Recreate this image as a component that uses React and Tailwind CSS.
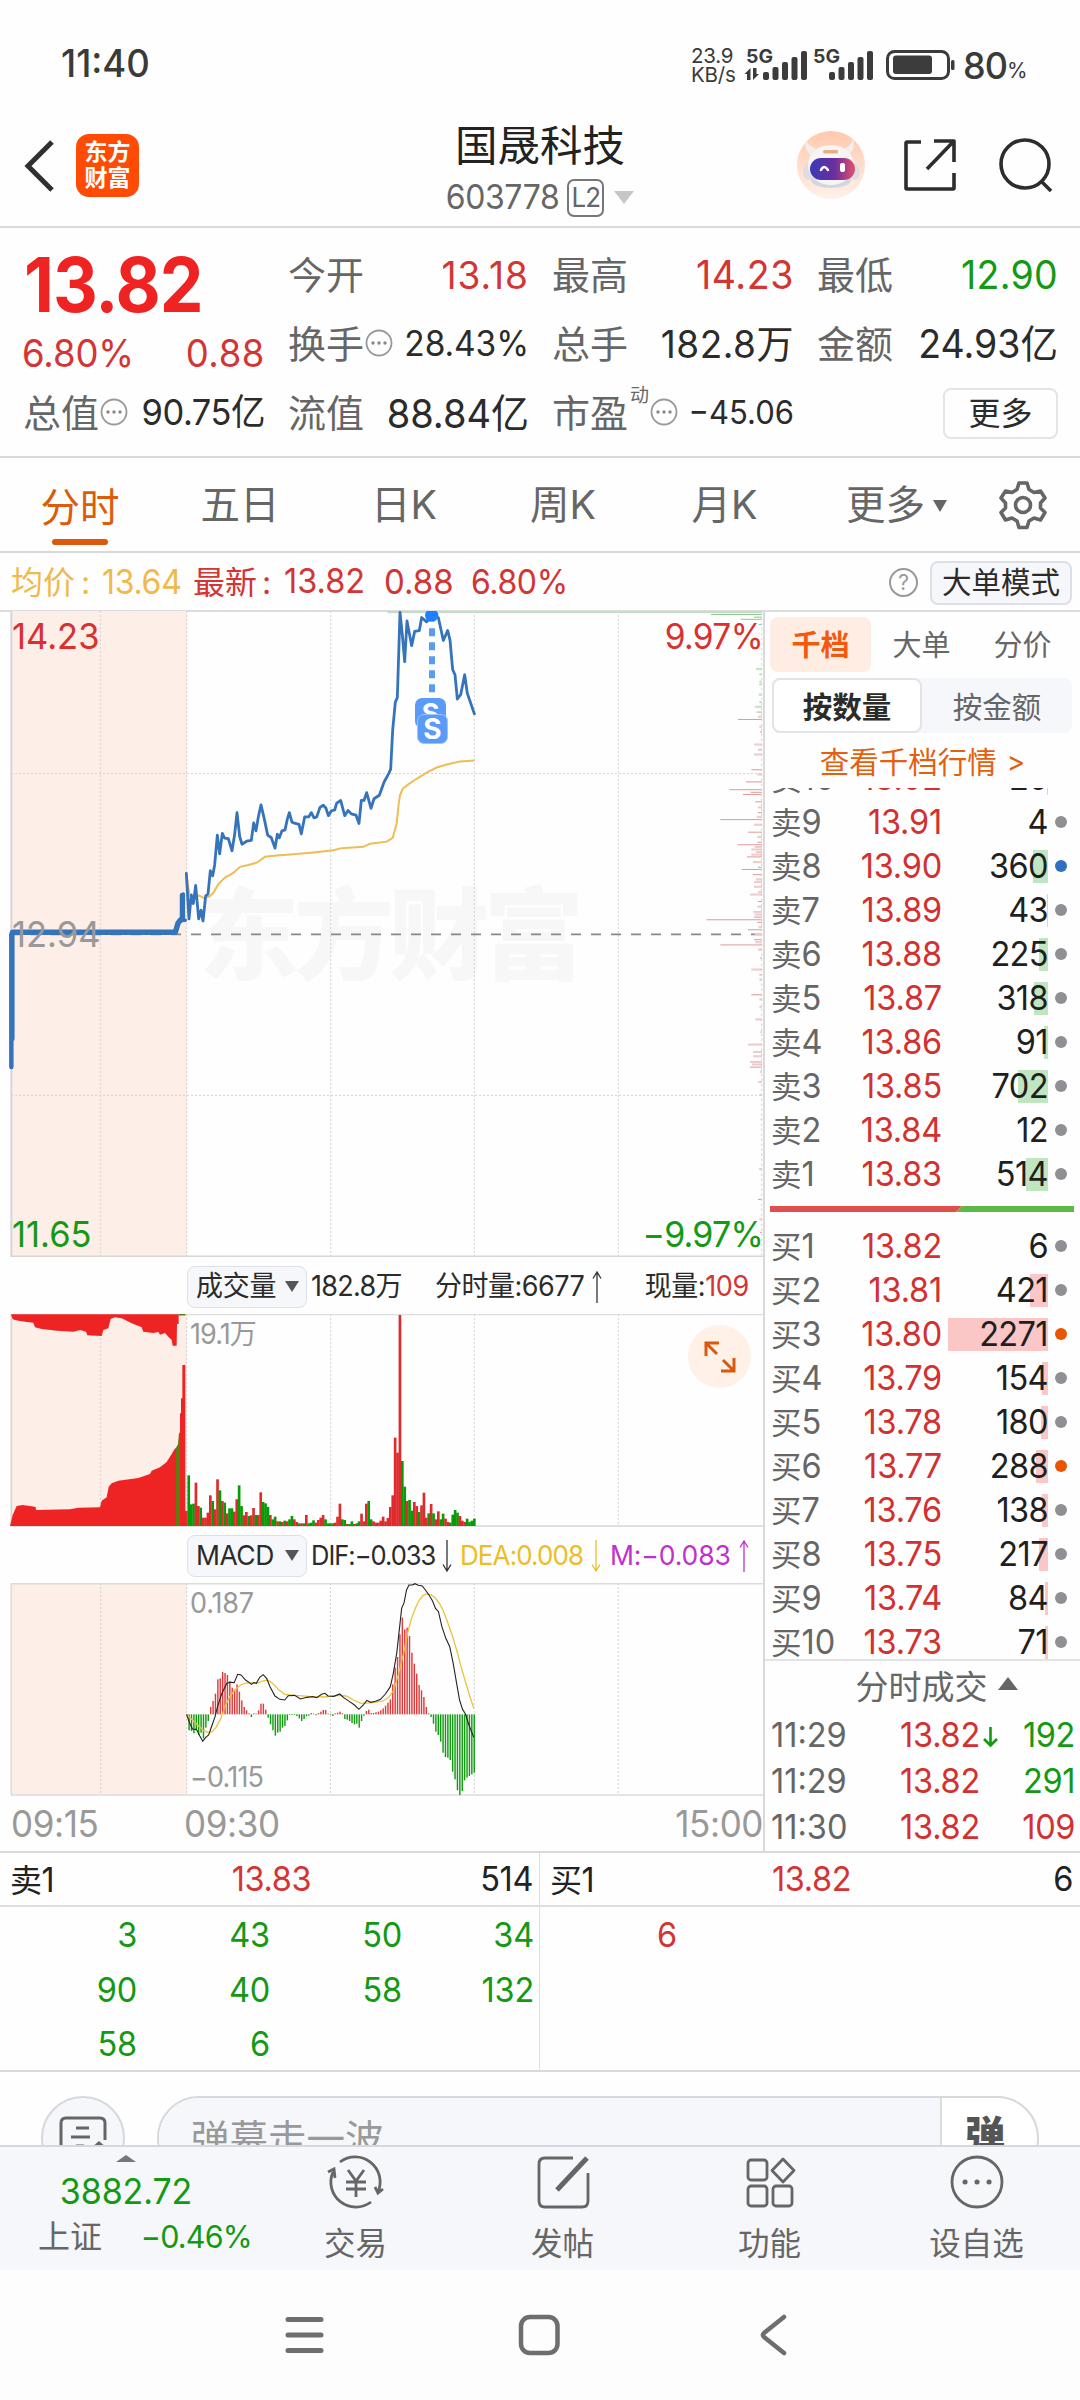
import clsx from "clsx";

// Minute bars: [height, isUp]
const VOLUME = [
  [45, 1], [152, 0], [65, 0], [67, 0], [130, 1], [60, 1], [55, 0], [25, 1], [25, 1], [40, 1],
  [92, 1], [75, 0], [50, 1], [140, 1], [107, 0], [75, 1], [70, 0], [38, 1], [53, 0], [53, 0],
  [43, 1], [80, 1], [122, 0], [60, 0], [32, 1], [42, 1], [30, 0], [32, 1], [54, 1], [33, 0],
  [33, 1], [101, 1], [72, 0], [68, 0], [57, 0], [33, 1], [20, 0], [28, 0], [14, 1], [14, 0],
  [12, 1], [16, 0], [14, 1], [20, 0], [30, 0], [20, 1], [12, 1], [8, 0], [8, 1], [8, 0],
  [33, 1], [8, 0], [10, 0], [17, 0], [10, 1], [18, 1], [25, 1], [33, 1], [20, 0], [8, 0],
  [8, 0], [8, 0], [10, 1], [28, 1], [67, 1], [20, 0], [18, 0], [6, 1], [6, 0], [14, 0],
  [6, 1], [8, 0], [14, 0], [37, 1], [14, 1], [67, 1], [75, 0], [20, 0], [14, 1], [10, 1],
  [10, 1], [16, 1], [28, 1], [14, 1], [24, 1], [57, 1], [92, 1], [265, 1], [220, 1], [633, 1],
  [195, 0], [118, 0], [75, 1], [78, 0], [46, 0], [72, 1], [60, 1], [42, 0], [62, 1], [100, 1],
  [25, 1], [38, 0], [66, 1], [38, 0], [20, 1], [44, 1], [20, 0], [37, 0], [22, 1], [12, 1],
  [10, 0], [34, 0], [48, 0], [40, 0], [30, 1], [16, 1], [12, 1], [22, 0], [12, 0], [16, 0], [22, 0],
];

const MACD = [
  0, -48, -50, -57, -48, -62, -55, -72, -40, -20, 22, 40, 62, 105, 108, 127, 124, 118, 100, 80,
  73, 90, 68, 42, 22, 12, 3, -8, 3, 2, 12, 32, 32, 14, -10, -30, -48, -64, -55, -52,
  -40, -35, -18, -2, -2, -2, -5, -12, -20, -14, -6, -4, 4, 2, -3, 4, 8, 13, 13, 2,
  -2, -5, 3, 5, 8, 3, -14, -16, -20, -26, -30, -28, -40, -20, -4, 10, 14, 4, 4, 6,
  8, 12, 18, 26, 35, 45, 90, 140, 172, 240, 290, 255, 260, 235, 185, 152, 122, 88, 72, 52,
  22, 3, -8, -28, -52, -62, -82, -115, -128, -130, -137, -172, -195, -228, -242, -230, -198, -190, -185, -180, -175,
];

// Price distribution on the right edge: [y, width]
const SPREAD = [
  [33, 153], [39, 24], [44, 64], [56, 10], [159, 18], [171, 8], [188, 8], [194, 8], [218, 10], [235, 8], [246, 22], [258, 16],
  [269, 12], [275, 72], [292, 8], [304, 6], [333, 24], [345, 12], [356, 24], [391, 32], [402, 14], [419, 48], [437, 98], [443, 34],
  [448, 57], [465, 20], [478, 12], [490, 12], [500, 16], [506, 125], [518, 24], [535, 42], [546, 14], [558, 14], [564, 74], [569, 22],
  [575, 32], [581, 18], [587, 32], [592, 45], [604, 27], [616, 12], [621, 61], [633, 27], [644, 18], [650, 24], [661, 24], [673, 12],
  [679, 36], [695, 12], [707, 14], [719, 26], [725, 22], [731, 24], [737, 167], [743, 14], [754, 10], [760, 42], [771, 22], [783, 24],
  [789, 20], [795, 125], [806, 12], [825, 6], [852, 32], [864, 8], [875, 8], [910, 32], [921, 8], [938, 8], [967, 20], [996, 5],
  [1025, 42], [1042, 27], [1052, 27], [1065, 36], [1071, 30], [1077, 36], [1088, 6], [1111, 12], [1141, 8], [1197, 4], [1312, 9], [1382, 12],
  [1428, 8], [1458, 6],
];

const SELLS = [
  ["卖10", "13.92", 20, 1],
  ["卖9", "13.91", 4, 0],
  ["卖8", "13.90", 360, 15, "bg-[#2f6fc1]"],
  ["卖7", "13.89", 43, 1],
  ["卖6", "13.88", 225, 9],
  ["卖5", "13.87", 318, 14],
  ["卖4", "13.86", 91, 4],
  ["卖3", "13.85", 702, 30],
  ["卖2", "13.84", 12, 0],
  ["卖1", "13.83", 514, 22],
];

const BUYS = [
  ["买1", "13.82", 6, 0],
  ["买2", "13.81", 421, 18],
  ["买3", "13.80", 2271, 100, "bg-[#e85503]"],
  ["买4", "13.79", 154, 6],
  ["买5", "13.78", 180, 7],
  ["买6", "13.77", 288, 12, "bg-[#e85503]"],
  ["买7", "13.76", 138, 6],
  ["买8", "13.75", 217, 9],
  ["买9", "13.74", 84, 3],
  ["买10", "13.73", 71, 3],
];

const PRICE_LINE =
  "559,630 567,735 574,680 580,700 587,658 596,735 603,715 609,740 617,682 624,678 631,624 638,636 644,610 652,542 659,585 667,538 674,549 685,550 696,578 704,540 711,490 719,545 726,563 740,556 754,554 761,514 768,532 775,500 783,472 793,505 803,542 814,548 825,572 832,540 838,548 846,532 855,530 862,505 868,490 876,512 886,515 897,517 904,539 914,500 926,500 934,490 942,502 950,500 960,478 970,473 978,480 985,497 994,486 1004,484 1010,468 1022,462 1034,497 1044,485 1054,493 1068,496 1077,515 1084,462 1092,462 1100,444 1113,480 1122,458 1138,450 1152,420 1166,400 1172,390 1178,300 1186,235 1192,225 1200,28 1207,80 1214,142 1221,48 1235,105 1244,72 1258,70 1265,40 1280,50 1294,35 1315,40 1330,93 1343,70 1350,92 1358,160 1365,172 1372,228 1382,218 1394,172 1402,215 1423,262";

const AVG_LINE =
  "559,630 568,678 580,690 597,681 612,687 628,684 640,675 655,655 675,640 700,629 720,615 745,611 772,605 795,592 830,589 880,586 940,582 1000,577 1025,572 1090,569 1110,562 1160,557 1178,548 1190,515 1196,470 1200,450 1208,435 1225,425 1250,412 1280,398 1310,386 1340,379 1380,372 1423,370";

const DIF_LINE =
  "380,553 385,575 392,597 400,598 407,618 413,634 419,622 425,615 432,585 438,560 443,530 452,490 462,460 470,457 477,458 484,433 491,435 500,450 508,458 512,463 517,458 522,460 529,442 536,434 543,445 550,470 560,498 570,508 580,510 587,497 600,496 612,507 625,502 637,500 645,503 655,493 662,490 668,498 680,499 692,492 700,503 712,515 722,525 731,538 740,525 747,511 755,517 765,514 775,508 785,492 795,470 801,430 808,370 814,290 818,235 823,218 828,180 833,165 840,165 845,161 852,166 860,168 868,183 875,198 881,213 887,235 893,245 900,290 908,325 916,350 923,400 930,460 936,510 942,538 948,552 955,585 965,622";

const DEA_LINE =
  "380,553 392,570 405,588 415,602 425,608 432,605 440,592 450,565 458,530 468,500 478,480 490,465 502,459 525,459 535,453 545,450 555,460 568,480 580,493 600,496 630,499 660,501 690,496 705,498 720,510 735,520 760,518 780,513 792,502 802,480 812,430 822,370 830,310 838,265 846,235 854,210 862,196 870,192 878,194 886,203 895,220 903,243 912,278 922,320 932,370 940,415 948,455 956,495 965,535";

const RED = "#ee2424";
const GREEN = "#069c06";

// Numbers are drawn slightly taller than the hanzi next to them
function Num({ className, children }) {
  return <span className={clsx("inline-block scale-y-[1.04] whitespace-nowrap", className)}>{children}</span>;
}

function StatusBar() {
  return (
    <div className="flex h-[128px] items-center pt-[2px] text-[#3a3a3a]">
      <Num className="ml-[61px] w-[630px] text-[36.500px] font-medium">11:40</Num>
      <div className="w-[51px] text-[20.500px] leading-[19px] tracking-[-0.2px]">
        <div>23.9</div>
        <div>KB/s</div>
      </div>
      <svg width="216" height="40" viewBox="744 44 216 40" className="shrink-0" fill="#3c3c3c">
        <text x="748" y="61.500" fontSize="19" fontWeight="700" textLength="27" lengthAdjust="spacingAndGlyphs">5G</text>
        <text x="815" y="61.500" fontSize="19" fontWeight="700" textLength="27" lengthAdjust="spacingAndGlyphs">5G</text>
        <path d="M749 79h3.500V67l-6 6h2.500zM755 67h3.500v6h2.500l-6 6z" />
        {[765, 831].map((x) => (
          <g key={x}>
            <rect x={x} y="71" width="6" height="8" rx="2" />
            <rect x={x + 9.5} y="66" width="6" height="13" rx="2" />
            <rect x={x + 19} y="61" width="6" height="18" rx="2" />
            <rect x={x + 28.500} y="56" width="6" height="23" rx="2" />
            <rect x={x + 38} y="50" width="6" height="29" rx="2" />
          </g>
        ))}
        <rect x="889.500" y="50.500" width="61" height="27" rx="7" fill="none" stroke="#3c3c3c" strokeWidth="3" />
        <rect x="895" y="54.500" width="39" height="18.500" rx="3" />
        <rect x="953" y="59" width="3.500" height="10" rx="1.500" />
      </svg>
      <div className="ml-[5px] flex items-baseline">
        <Num className="text-[36px] font-medium tracking-[-1px]">80</Num>
        <span className="text-[21px]">%</span>
      </div>
    </div>
  );
}

function Robot() {
  return (
    <svg width="68" height="70" viewBox="0 0 68 70">
      <defs>
        <linearGradient id="halo" x1="0" y1="0" x2="0" y2="1">
          <stop offset="0" stopColor="#ffc9ad" />
          <stop offset="1" stopColor="#fff1ea" />
        </linearGradient>
        <linearGradient id="visor" x1="0" y1="0" x2="1" y2="0">
          <stop offset="0" stopColor="#3b39b5" />
          <stop offset="0.55" stopColor="#6b2f9c" />
          <stop offset="1" stopColor="#e5506a" />
        </linearGradient>
      </defs>
      <circle cx="34" cy="35" r="34" fill="url(#halo)" />
      <path d="M9 10q-3 9 5 15l5-6q-8-3-10-9zM56 9q3 9-4 16l-5-6q7-3 9-10z" fill="#f3eeee" />
      <ellipse cx="34" cy="50" rx="20" ry="8" fill="#d5d5df" />
      <ellipse cx="11" cy="42" rx="5" ry="8" fill="#dfdde4" />
      <ellipse cx="58" cy="42" rx="5" ry="8" fill="#dfdde4" />
      <ellipse cx="34" cy="35" rx="23" ry="20" fill="#f7f4f5" />
      <rect x="13" y="28" width="45" height="22" rx="11" fill="url(#visor)" />
      <path d="M24 40q3-6 7 0" fill="none" stroke="#fff" strokeWidth="2.500" strokeLinecap="round" />
      <rect x="43" y="33" width="5" height="9" rx="2" fill="#fff" />
      <rect x="26" y="20" width="15" height="3.500" rx="1.500" fill="#e3b184" />
    </svg>
  );
}

function Header() {
  return (
    <header className="flex h-[100px] items-center border-b-2 border-[#d9d9d9]">
      <svg width="32" height="56" viewBox="0 0 32 56" className="mt-[-24px] ml-[23px]" fill="none" stroke="#303030" strokeWidth="5">
        <path d="M29 5 5 29 29 53" />
      </svg>
      <div className="mt-[-24px] ml-[21px] flex size-[63px] flex-col items-center justify-center rounded-[13px] bg-[#ff4b04] text-[23px] leading-[26px] font-bold text-white">
        <span>东方</span>
        <span>财富</span>
      </div>
      <div className="mt-[-18px] ml-[256px] flex w-[290px] flex-col items-center">
        <div className="text-[42.500px] leading-[54px] text-[#222]">国晟科技</div>
        <div className="flex h-[44px] items-center pt-[5px] text-[#666]">
          <Num className="text-[32px] tracking-[-0.4px]">603778</Num>
          <span className="ml-2 flex h-[38px] w-[37px] items-center justify-center rounded-[7px] border-2 border-[#777]">
            <Num className="text-[26px] tracking-[-1px]">L2</Num>
          </span>
          <svg width="20" height="13" viewBox="0 0 20 13" className="ml-[10px]"><path d="M0 0h20L10 13z" fill="#c6c6c6" /></svg>
        </div>
      </div>
      <div className="mt-[-24px] ml-[112px]"><Robot /></div>
      <svg width="60" height="60" viewBox="0 0 60 60" className="mt-[-22px] ml-[36px]" fill="none" stroke="#2d2d2d" strokeWidth="3.600">
        <path d="M20 6H6q-1 0-1 1v45q0 1 1 1h46q1 0 1-1V37M33 5h20v21M52 6 26 33" strokeLinejoin="round" />
      </svg>
      <svg width="60" height="60" viewBox="0 0 60 60" className="mt-[-22px] ml-[36px]" fill="none" stroke="#2d2d2d" strokeWidth="3.600">
        <circle cx="28" cy="28" r="24" />
        <path d="m44 45 10 10" />
      </svg>
    </header>
  );
}

function MoreDots() {
  return (
    <svg width="28" height="28" viewBox="0 0 28 28" className="mb-1 ml-px shrink-0">
      <circle cx="14" cy="14" r="12.500" fill="none" stroke="#999" strokeWidth="1.800" />
      <circle cx="8" cy="14" r="1.700" fill="#888" />
      <circle cx="14" cy="14" r="1.700" fill="#888" />
      <circle cx="20" cy="14" r="1.700" fill="#888" />
    </svg>
  );
}

function Stat({ label, dots, note, value, tone = "text-[#2b2b2b]", size = "text-[34px]" }) {
  return (
    <div className="flex h-[69px] items-center">
      <span className="ml-[-1px] text-[38px] whitespace-nowrap text-[#666]">{label}</span>
      {note && <span className="mb-[34px] ml-[2px] text-[19px] text-[#666]">{note}</span>}
      {dots && <MoreDots />}
      <Num className={clsx("mr-[-2px] ml-auto", size, tone)}>{value}</Num>
    </div>
  );
}

function Quote() {
  return (
    <section className="flex h-[230px] gap-[26px] border-b-2 border-[#d9d9d9] pt-[13px] pr-[23px] pl-[24px]">
      <div className="w-[239px]">
        <Num className="h-[86px] origin-center scale-y-[1.08] text-[69.500px] leading-[88px] font-bold tracking-[-1px] text-[#f02323]">13.82</Num>
        <div className="flex h-[52px] items-center justify-between pt-[4px] text-[36.500px] text-[#d33434]">
          <Num className="ml-[-2px] tracking-[-0.1px]">6.80%</Num>
          <Num className="mr-[-2px] tracking-[0.6px]">0.88</Num>
        </div>
        <Stat label="总值" dots value="90.75亿" size="text-[34.500px] tracking-[-0.5px]" />
      </div>
      <div className="w-[238px]">
        <Stat label="今开" value="13.18" tone="text-[#d33434]" size="text-[37px] tracking-[1px]" />
        <Stat label="换手" dots value="28.43%" size="text-[33.500px] tracking-[-0.1px]" />
        <Stat label="流值" value="88.84亿" size="text-[38px]" />
      </div>
      <div className="w-[239px]">
        <Stat label="最高" value="14.23" tone="text-[#d33434]" size="text-[37.500px] tracking-[0.6px]" />
        <Stat label="总手" value="182.8万" size="text-[37px] tracking-[0.5px]" />
        <Stat label="市盈" note="动" dots value="−45.06" size="text-[31px]" />
      </div>
      <div className="w-[238px]">
        <Stat label="最低" value="12.90" tone="text-[#149914]" size="text-[37.500px] tracking-[0.3px]" />
        <Stat label="金额" value="24.93亿" size="text-[37.500px]" />
        <div className="flex h-[69px] items-center justify-end">
          <div className="mr-[-2px] flex h-[51px] w-[115px] items-center justify-center rounded-lg border-2 border-[#e4e4e6] text-[32px] text-[#2b2b2b]">更多</div>
        </div>
      </div>
    </section>
  );
}

function Gear() {
  return (
    <svg width="50" height="50" viewBox="0 0 50 50" fill="none" stroke="#666" strokeWidth="3.600" strokeLinejoin="round">
      <path d="M21 3h8l2 6.500 5 3 6.500-1.500 4.500 7-4.500 5v5l4.500 4.500-4.500 7.500-6.500-2-5 3-2 6.500h-8l-2-6.500-5-3-6.500 2L3 32.500 7.500 28v-5L3 18l4.500-7 6.500 1.500 5-3z" />
      <circle cx="25" cy="25" r="7.500" />
    </svg>
  );
}

function PeriodTabs() {
  return (
    <nav className="flex h-[95px] items-center border-b-2 border-[#d9d9d9] text-[39.500px] text-[#666]">
      <div className="flex h-full w-[160px] flex-col items-center pt-[20px] text-[#dc5c0c]">
        <span className="leading-[60px]">分时</span>
        <span className="mt-px h-[6px] w-[56px] rounded-[3px] bg-[#d9590f]" />
      </div>
      <div className="w-[160px] pt-[3px] text-center">五日</div>
      <div className="w-[168px] pt-[3px] text-center">日K</div>
      <div className="w-[150px] pt-[3px] text-center">周K</div>
      <div className="w-[173px] pt-[3px] text-center">月K</div>
      <div className="ml-[35px] flex w-[152px] items-center pt-[3px]">
        更多
        <svg width="14" height="12" viewBox="0 0 14 12" className="ml-[8px]"><path d="M0 0h14L7 12z" fill="#666" /></svg>
      </div>
      <Gear />
    </nav>
  );
}

function InfoBar() {
  return (
    <div className="flex h-[59px] items-center border-b-2 border-[#dcdcdc] pt-[2px] text-[32px] whitespace-nowrap text-[#d33434]">
      <div className="flex w-[181px] items-center pl-[11px] text-[#eeba4b]">
        均价<span className="w-[27px] shrink-0 pl-[6px]">:</span>
        <Num className="text-[32px] tracking-[-0.3px]">13.64</Num>
      </div>
      <div className="flex w-[103px] items-center pl-[12px]">
        最新<span className="pl-[5px]">:</span>
      </div>
      <Num className="w-[100px] text-[32.500px]">13.82</Num>
      <Num className="w-[87px] text-[33px]">0.88</Num>
      <Num className="w-[418px] text-[32px] tracking-[-0.4px]">6.80%</Num>
      <span className="flex size-[29px] items-center justify-center rounded-full border-2 border-[#999] text-[21px] leading-none text-[#999]">?</span>
      <span className="ml-[12px] flex h-[44px] w-[142px] items-center justify-center rounded-lg border-2 border-[#dcdfe6] bg-[#f6f7fa] text-[29.500px] text-[#2b2b2b]">大单模式</span>
    </div>
  );
}

function GridV({ xs, y1, y2 }) {
  return xs.map((x) => (
    <path key={x} d={`M${x} ${y1}V${y2}`} stroke="#d2d2d2" strokeDasharray="2 2" vectorEffect="non-scaling-stroke" />
  ));
}

function PriceChart() {
  return (
    <div className="relative h-[646px]">
      <div className="absolute top-[255px] left-[199px] text-[100px] leading-[140px] font-black tracking-[-5px] text-[#f7f7f7]">东方财富</div>
      <svg width="763" height="646" viewBox="0 25 2289 1490" preserveAspectRatio="none" className="absolute inset-0" fill="none">
        <rect x="33" y="25" width="528" height="1490" fill="#fdeee7" />
        <GridV xs={[301, 560, 992, 1423, 1855]} y1="25" y2="1515" />
        {[400, 1142].map((y) => (
          <path key={y} d={`M33 ${y}H2289`} stroke="#d2d2d2" strokeDasharray="2 2" vectorEffect="non-scaling-stroke" />
        ))}
        <path d="M34 25V1515M33 1514H2289" stroke="#d6d6d6" strokeWidth="2" vectorEffect="non-scaling-stroke" />
        <path d="M33 771H2289" stroke="#888" strokeWidth="1.800" strokeDasharray="10 10" vectorEffect="non-scaling-stroke" />
        <rect x="1162" y="25" width="1124" height="5" fill="#c6ddc8" />
        {SPREAD.map(([y, w], i) => {
          const thin = w > 50 || i % 2;
          return (
            <rect
              key={y}
              x={2286 - w}
              y={y - (thin ? 1 : 2.5)}
              width={w}
              height={thin ? 2.3 : 5}
              fill={y < 262 ? (thin ? "#8fc78f" : "#c5e3c5") : thin ? "#dc9a9a" : "#f0cccc"}
            />
          );
        })}
        <path d="M2285 30V262" stroke="#bfe0bf" strokeDasharray="2 3" vectorEffect="non-scaling-stroke" />
        <path d="M2285 262V1510" stroke="#eebcbc" strokeDasharray="2 3" vectorEffect="non-scaling-stroke" />
        <polyline points={AVG_LINE} stroke="#efbd55" strokeWidth="2" vectorEffect="non-scaling-stroke" />
        <g stroke="#3573ba" strokeLinejoin="round" strokeLinecap="round">
          <path d="M38 766H526L534 745L541 738" strokeWidth="5.500" vectorEffect="non-scaling-stroke" />
          <path d="M37 766V1012M34 770V1077M546 680V738" strokeWidth="4.500" vectorEffect="non-scaling-stroke" />
          <path d="M541 738H556M550 678V738" strokeWidth="3.500" vectorEffect="non-scaling-stroke" />
          <polyline points={PRICE_LINE} strokeWidth="2.800" vectorEffect="non-scaling-stroke" />
        </g>
        <ellipse cx="1295" cy="35" rx="20" ry="15" fill="#1f80ff" />
        <path d="M1296 65V222" stroke="#5a9cf2" strokeWidth="6" strokeDasharray="8 6" vectorEffect="non-scaling-stroke" />
      </svg>
      <Num className="absolute top-[6px] left-3 text-[34.500px] leading-[40px] text-[#d93030]">14.23</Num>
      <Num className="absolute top-[304px] left-3 text-[34.500px] leading-[40px] text-[#999]">12.94</Num>
      <Num className="absolute bottom-[2px] left-3 text-[34.500px] leading-[40px] text-[#149914]">11.65</Num>
      <Num className="absolute top-[6px] right-0 text-[33.500px] leading-[40px] tracking-[-0.6px] text-[#d93030]">9.97%</Num>
      <Num className="absolute right-0 bottom-[2px] text-[34px] leading-[40px] tracking-[-0.8px] text-[#149914]">−9.97%</Num>
      <span className="absolute top-[87px] left-[415px] flex h-[30px] w-[31px] items-center justify-center rounded-[7px] bg-[#5a9bf8] text-[27px] leading-none font-bold text-white">S</span>
      <span className="absolute top-[103px] left-[417px] flex h-[30px] w-[31px] items-center justify-center rounded-[7px] border border-[#9cc3fb] bg-[#5a9bf8] text-[28px] leading-none font-bold text-white">S</span>
    </div>
  );
}

function Picker({ children }) {
  return (
    <div className="ml-[187px] flex h-[42px] w-[120px] shrink-0 items-center justify-between rounded-lg border border-[#dde0e8] bg-[#f6f7fa] pr-[7px] pl-[8px]">
      {children}
      <svg width="14" height="11" viewBox="0 0 14 11"><path d="M0 0h14L7 11z" fill="#555" /></svg>
    </div>
  );
}

function Arrow({ down, color, className }) {
  return (
    <svg width="12" height="34" viewBox="0 0 12 34" className={clsx("shrink-0", className, down && "rotate-180")}>
      <path d="M6 33V2M2 8.500 6 2l4 6.500" fill="none" stroke={color} strokeWidth="1.300" />
    </svg>
  );
}

function VolumeChart() {
  return (
    <>
      <div className="flex h-[57px] items-center pt-[2px] text-[27px] text-[#2b2b2b]">
        <Picker><Num className="tracking-[-0.3px]">成交量</Num></Picker>
        <Num className="ml-1 w-[124px] tracking-[-0.7px]">182.8万</Num>
        <Num className="tracking-[-0.5px]">分时量:6677</Num>
        <Arrow color="#333" className="ml-[7px]" />
        <Num className="ml-auto tracking-[-0.5px]">现量:</Num>
        <Num className="mr-[14px] tracking-[-0.3px] text-[#d33434]">109</Num>
      </div>
      <div className="relative h-[213px]">
        <svg width="763" height="213" viewBox="0 192 2289 639" className="absolute inset-0">
          <rect x="33" y="192" width="528" height="636" fill="#fdeee7" />
          <path d="M33 194H2289" stroke="#dedede" strokeWidth="4" />
          <path d="M34 192V828" stroke="#d6d6d6" strokeWidth="5" />
          <path d="M33 828H2289" stroke="#d6d6d6" strokeWidth="5" />
          <GridV xs={[301, 560, 992, 1423, 1855]} y1="192" y2="828" />
          <polygon fill={RED} points="33,193 38,208 55,212 75,215 100,218 105,232 125,237 170,242 220,245 240,240 258,245 262,256 305,258 310,240 325,235 332,207 345,202 365,205 395,220 425,232 430,245 460,249 475,246 480,254 495,249 505,260 515,270 518,287 530,287 531,222 536,222 536,193" />
          <polygon fill={RED} points="30,828 38,795 50,768 68,765 95,769 107,771 108,780 210,778 235,773 300,772 305,752 320,742 326,710 335,700 355,692 415,684 450,672 455,662 480,652 500,636 515,612 524,597 530,592 530,828" />
          <polygon fill="#5f7a10" points="528,828 528,594 534,582 537,548 540,548 540,828" />
          <polygon fill={RED} points="540,828 540,490 543,490 543,445 547,445 547,345 556,345 556,828" />
          <path d="M536 194h20" stroke="#5f7a10" strokeWidth="5" />
          {VOLUME.map(([h, up], i) => (
            <rect key={i} x={555 + i * 7.2} y={828 - h} width="8" height={h} fill={up ? "#df2b2b" : GREEN} />
          ))}
        </svg>
        <Num className="absolute top-[3px] left-[190px] text-[27px] tracking-[-0.9px] text-[#999]">19.1万</Num>
        <div className="absolute top-[11px] left-[688px] size-[63px] rounded-full bg-[#fff0e8]">
          <svg width="63" height="63" viewBox="0 0 63 63" fill="none" stroke="#d9590f" strokeWidth="3">
            <path d="M18 31V18h13M18 18l11 11M46 33v13H33M46 46 35 35" />
          </svg>
        </div>
      </div>
    </>
  );
}

function MacdChart() {
  return (
    <>
      <div className="flex h-[56px] items-center pt-px text-[#2b2b2b]">
        <Picker><Num className="scale-y-[1.1] text-[26.500px] tracking-[-0.5px]">MACD</Num></Picker>
        <Num className="ml-1 w-[130px] scale-y-[1.1] text-[25.500px] tracking-[-1px]">DIF:−0.033</Num>
        <Arrow down color="#333" />
        <Num className="ml-[7px] w-[130px] scale-y-[1.1] text-[26px] tracking-[-0.9px] text-[#edbd28]">DEA:0.008</Num>
        <Arrow down color="#edbd28" />
        <Num className="ml-[8px] w-[128px] scale-y-[1.1] text-[26.500px] tracking-[-0.1px] text-[#c12fd0]">M:−0.083</Num>
        <Arrow color="#c12fd0" />
      </div>
      <div className="relative h-[213px]">
        <svg width="763" height="213" viewBox="0 159 1554 639" preserveAspectRatio="none" className="absolute inset-0" fill="none">
          <rect x="22" y="159" width="358" height="636" fill="#fdeee7" />
          <path d="M22 161H1554M23 159V795M22 795H1554" stroke="#dcdcdc" strokeWidth="1.600" vectorEffect="non-scaling-stroke" />
          <GridV xs={[205, 380, 673, 966, 1259]} y1="159" y2="795" />
          {MACD.map((v, i) => (
            <rect key={i} x={378.8 + i * 4.88} y={v > 0 ? 553 - v : 553} width="2.9" height={Math.abs(v)} fill={v > 0 ? "#df3a3a" : "#0f9c0f"} />
          ))}
          <polyline points={DEA_LINE} stroke="#eac23a" strokeWidth="1.300" vectorEffect="non-scaling-stroke" />
          <polyline points={DIF_LINE} stroke="#222" strokeWidth="1.100" vectorEffect="non-scaling-stroke" />
        </svg>
        <Num className="absolute top-[3px] left-[190px] text-[27px] tracking-[-0.2px] text-[#999]">0.187</Num>
        <Num className="absolute bottom-[1px] left-[190px] text-[27px] tracking-[-0.8px] text-[#999]">−0.115</Num>
      </div>
      <div className="flex h-[55px] items-center pt-[2px] text-[35px] tracking-[-0.4px] text-[#999]">
        <Num className="ml-[11px] w-[173px]">09:15</Num>
        <Num>09:30</Num>
        <Num className="mr-0 ml-auto">15:00</Num>
      </div>
    </>
  );
}

function DepthRow({ row, tone }) {
  const [label, price, qty, width, dot = "bg-[#8f8f94]"] = row;
  return (
    <div className="flex h-[44px] shrink-0 items-center">
      <span className="w-[69px] pt-[2px] whitespace-nowrap text-[#666]">
        <span className="text-[30.500px]">{label.slice(0, 1)}</span>
        <Num className="text-[32.500px]">{label.slice(1)}</Num>
      </span>
      <Num className="w-[102px] pt-[2px] text-right text-[32.500px] tracking-[-0.2px] text-[#d33030]">{price}</Num>
      <div className="relative ml-[6px] flex h-[33px] w-[100px] items-center justify-end">
        <div className={clsx("absolute right-0 h-full", tone)} style={{ width }} />
        <Num className="relative pt-[2px] text-[32.500px] tracking-[-0.6px] text-[#1f1f1f]">{qty}</Num>
      </div>
      <span className={clsx("ml-[7px] size-3 rounded-full", dot)} />
    </div>
  );
}

function OrderBook() {
  const trades = [
    ["11:29", "192", "text-[#149914]", true],
    ["11:29", "291", "text-[#149914]"],
    ["11:30", "109", "text-[#d33030]"],
  ];
  return (
    <aside className="flex h-full w-[317px] flex-col border-l-2 border-[#d9d9d9]">
      <div className="flex pt-[6px] pl-[5px] text-[29px] text-[#666]">
        <div className="flex h-[55px] w-[101px] items-center justify-center rounded-lg bg-[#ffece3] pt-[3px] font-bold text-[#f2590d]">千档</div>
        <div className="flex h-[55px] w-[101px] items-center justify-center pt-[3px]">大单</div>
        <div className="flex h-[55px] w-[101px] items-center justify-center pt-[3px]">分价</div>
      </div>
      <div className="mt-[6px] ml-[7px] flex h-[55px] w-[300px] rounded-lg bg-[#f6f7fa] text-[29.500px] text-[#666]">
        <div className="flex w-[150px] items-center justify-center rounded-lg border-2 border-[#e2e3e8] bg-white pt-[3px] font-bold text-[#2b2b2b]">按数量</div>
        <div className="flex w-[150px] items-center justify-center pt-[3px]">按金额</div>
      </div>
      <div className="flex h-[55px] items-center justify-center gap-[10px] pt-[4px] text-[29.500px] text-[#e2600f]">
        <span>查看千档行情</span>
        <span className="text-[28px]">&gt;</span>
      </div>
      <div className="flex h-[411px] flex-col justify-end overflow-hidden pl-[6px]">
        {SELLS.map((row) => <DepthRow key={row[0]} row={row} tone="bg-[#c0e5c1]" />)}
        <div className="h-[3px] shrink-0" />
      </div>
      <svg width="304" height="6" viewBox="0 0 304 6" className="mt-[7px] ml-[5px]">
        <path d="M0 0H192L186 6H0z" fill="#e04e4e" />
        <path d="M192 0H304V6H186z" fill="#5cb947" />
      </svg>
      <div className="mt-[12px] h-[435px] overflow-hidden pl-[6px]">
        {BUYS.map((row) => <DepthRow key={row[0]} row={row} tone="bg-[#fac6c6]" />)}
      </div>
      <div className="flex h-[53px] items-center justify-center gap-[10px] border-t-2 border-[#e3e3e3] pt-[2px] pl-[28px] text-[33px] text-[#666]">
        分时成交
        <svg width="20" height="13" viewBox="0 0 20 13" className="mb-[8px]"><path d="M0 13h20L10 0z" fill="#666" /></svg>
      </div>
      {trades.map(([time, qty, tone, down], i) => (
        <div key={i} className="flex h-[46px] items-center pt-[3px] pr-[5px] pl-[6px] text-[32.500px]">
          <Num className="w-[129px] text-[#666]">{time}</Num>
          <Num className="tracking-[-0.2px] text-[#d33030]">13.82</Num>
          {down && (
            <svg width="15" height="20" viewBox="0 0 15 20" className="ml-[3px]" fill="none" stroke="#149914" strokeWidth="2.600">
              <path d="M7.500 0v18M1 12l6.500 6.500L14 12" />
            </svg>
          )}
          <Num className={clsx("ml-auto tracking-[-0.4px]", tone)}>{qty}</Num>
        </div>
      ))}
    </aside>
  );
}

function QueueSide({ label, price, qty, items, tone }) {
  return (
    <div className="h-full w-[540px]">
      <div className="flex h-[54px] items-center justify-between border-b-2 border-[#dedede] pt-[3px] pr-[7px] pl-[10px] text-[32.500px] tracking-[-0.4px] text-[#222]">
        <span className="flex w-[60px] items-center text-[32px] whitespace-nowrap">{label}<Num>1</Num></span>
        <Num className="text-[#d33434]">{price}</Num>
        <Num className="w-[60px] text-right">{qty}</Num>
      </div>
      <div className="grid grid-cols-[137px_133px_132px_132px] pt-[2px] text-[32.500px] tracking-[-0.2px]">
        {items.map((n, i) => (
          <div key={i} className={clsx("flex h-[54.500px] items-center justify-end", tone)}><Num>{n}</Num></div>
        ))}
      </div>
    </div>
  );
}

function Queue() {
  return (
    <section className="flex h-[221px] border-t-2 border-b-2 border-[#d9d9d9]">
      <QueueSide label="卖" price="13.83" qty="514" items={[3, 43, 50, 34, 90, 40, 58, 132, 58, 6]} tone="text-[#149914]" />
      <div className="-ml-px w-px bg-[#dedede]" />
      <QueueSide label="买" price="13.82" qty="6" items={[6]} tone="text-[#d33434]" />
    </section>
  );
}

function CommentBar() {
  return (
    <div className="flex h-[73px] overflow-hidden pt-[24px] pl-[41px]">
      <div className="flex size-[84px] shrink-0 justify-center rounded-full border-2 border-[#d5d8dd] bg-[#f6f7fa] pt-[18px]">
        <svg width="48" height="46" viewBox="0 0 48 46" fill="none" stroke="#666" strokeWidth="3">
          <path d="M2 44V7q0-5 5-5h34q5 0 5 5v17M17 12h13M12 21h19M17 30h8M32 34l8-7 8 7" />
        </svg>
      </div>
      <div className="ml-[32px] flex h-[84px] w-[882px] shrink-0 overflow-hidden rounded-full border-2 border-[#d5d8dd] bg-white">
        <div className="w-[783px] border-r-2 border-[#dcdcdc] bg-[#f6f7fa] pt-[13px] pl-[32px] text-[38.500px] leading-[56px] text-[#999]">弹幕走一波</div>
        <div className="pt-[10px] pl-[23px] text-[40px] leading-[56px] font-black text-[#555]">弹</div>
      </div>
    </div>
  );
}

const NAV = [
  {
    label: "交易",
    icon: (
      <>
        <path d="M14 9A25 25 0 0 1 52 39M45 49A25 25 0 0 1 7 19M2 19l6-3 1 9M57 36l-5 4-3-6" />
        <path d="m22 17 8 11 8-11M30 28v16M20 29h20M20 36h20" />
      </>
    ),
  },
  {
    label: "发帖",
    icon: (
      <>
        <path d="M40 5H12q-6 0-6 6v37q0 6 6 6h37q6 0 6-6V20" />
        <path d="M54 5 24 37" strokeWidth="5" />
      </>
    ),
  },
  {
    label: "功能",
    icon: (
      <>
        <rect x="8" y="7" width="19" height="20" rx="3" />
        <path d="M43 6 54 17.500 43 29 32 17.500z" strokeLinejoin="round" />
        <rect x="8" y="33" width="19" height="20" rx="3" />
        <rect x="33" y="33" width="19" height="20" rx="3" />
      </>
    ),
  },
  {
    label: "设自选",
    icon: (
      <>
        <circle cx="30" cy="29" r="25" />
        <path d="M18 29h.1M30 29h.1M42 29h.1" strokeWidth="5" strokeLinecap="round" />
      </>
    ),
  },
];

function BottomNav() {
  return (
    <footer className="flex h-[125px] border-t-2 border-[#d5d8dd] bg-[#f6f7fa] text-[#666]">
      <div className="w-[252px] pt-[8px]">
        <svg width="20" height="7" viewBox="0 0 20 7" className="mx-auto"><path d="M0 7h20L10 0z" fill="#777" /></svg>
        <Num className="mt-[8px] w-full text-center text-[34px] leading-[44px] tracking-[-0.1px] text-[#149914]">3882.72</Num>
        <div className="flex items-center justify-between pl-[38px] text-[32px] leading-[46px]">
          上证
          <Num className="text-[30.500px] tracking-[-0.8px] text-[#149914]">−0.46%</Num>
        </div>
      </div>
      {NAV.map(({ label, icon }) => (
        <div key={label} className="flex w-[207px] flex-col items-center pt-[6px]">
          <svg width="60" height="60" viewBox="0 0 60 60" fill="none" stroke="#666" strokeWidth="2.800">{icon}</svg>
          <span className="mt-[9px] text-[31.500px] leading-[44px]">{label}</span>
        </div>
      ))}
    </footer>
  );
}

function SystemNav() {
  return (
    <div className="flex h-[130px] items-center bg-[#fdfdfd] pl-[284px]">
      <svg width="520" height="50" viewBox="284 2310 520 50" fill="none" stroke="#6e6e6e" strokeWidth="5" strokeLinejoin="round" strokeLinecap="round">
        <path d="M288 2319.500h33M288 2335h33M288 2350.500h33" />
        <rect x="521" y="2317" width="36.500" height="36" rx="9" strokeWidth="4.500" />
        <path d="M784 2317 764 2333q-2 2 0 4l20 16" strokeWidth="4.500" />
      </svg>
    </div>
  );
}

export default function App() {
  return (
    <div className="flex h-[2400px] w-[1080px] flex-col overflow-hidden bg-[#fefefe] font-['Inter','Noto_Sans_CJK_SC',sans-serif] leading-[1.3]">
      <StatusBar />
      <Header />
      <Quote />
      <PeriodTabs />
      <InfoBar />
      <main className="mt-[-1px] flex h-[1240px] shrink-0">
        <div className="w-[763px]">
          <PriceChart />
          <VolumeChart />
          <MacdChart />
        </div>
        <OrderBook />
      </main>
      <Queue />
      <CommentBar />
      <BottomNav />
      <SystemNav />
    </div>
  );
}
